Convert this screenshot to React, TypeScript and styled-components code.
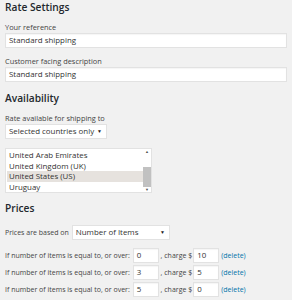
import React from "react";
import styled, { createGlobalStyle } from "styled-components";

const Global = createGlobalStyle`
  html, body { margin: 0; padding: 0; background: #f1f1f1; }
  body { font-family: "Open Sans", "Liberation Sans", sans-serif; color: #444; }
`;

const Page = styled.div`
  padding: 0 5px;
  width: 282px;
  display: flex;
  flex-direction: column;
`;

const Heading = styled.h3<{ $top: number }>`
  margin: ${(p) => p.$top}px 0 0;
  font-size: 10.2px;
  line-height: 15px;
  font-weight: 600;
  color: #23282d;
`;

const Label = styled.label<{ $top?: number }>`
  display: block;
  margin-top: ${(p) => p.$top ?? 7}px;
  font-size: 7.4px;
  line-height: 11px;
  color: #444;
`;

const TextInput = styled.div<{ $w?: number }>`
  box-sizing: border-box;
  height: 15px;
  flex-shrink: 0;
  width: ${(p) => (p.$w ? `${p.$w}px` : "100%")};
  background: #fff;
  border: 1px solid #e2e2e2;
  box-shadow: inset 0 1px 1px rgba(0, 0, 0, 0.04);
  font-size: 7.9px;
  line-height: 13px;
  padding: 0 3px;
  color: #333;
  white-space: nowrap;
  overflow: hidden;
`;

const Select = styled.div<{ $w: number }>`
  box-sizing: border-box;
  height: 15px;
  flex-shrink: 0;
  width: ${(p) => p.$w}px;
  background: #fff;
  border: 1px solid #e2e2e2;
  font-size: 7.9px;
  line-height: 13px;
  padding: 0 4px 0 3px;
  color: #333;
  display: flex;
  align-items: center;
  justify-content: space-between;
  white-space: nowrap;
`;

const Caret = styled.span`
  font-size: 5px;
  color: #222;
`;

const ListBox = styled.div`
  box-sizing: border-box;
  margin-top: 9px;
  width: 147px;
  height: 45px;
  background: #fff;
  border: 1px solid #e2e2e2;
  display: flex;
  padding: 1px 0 0 1px;
`;

const Options = styled.div`
  flex: 1;
  display: flex;
  flex-direction: column;
`;

const Option = styled.div<{ $selected?: boolean }>`
  height: 10.7px;
  font-size: 7.9px;
  line-height: 10.7px;
  padding-left: 2px;
  color: #333;
  background: ${(p) => (p.$selected ? "#e6e2de" : "transparent")};
  white-space: nowrap;
`;

const Scrollbar = styled.div`
  width: 8px;
  margin-top: -1px;
  display: flex;
  flex-direction: column;
  align-items: center;
  font-size: 4px;
  color: #555;
  line-height: 5px;
`;

const Track = styled.div`
  flex: 1;
  width: 100%;
  display: flex;
  flex-direction: column;
  justify-content: flex-end;
`;

const Thumb = styled.div`
  width: 100%;
  height: 20px;
  background: #c1c1c1;
`;

const Row = styled.div<{ $top: number }>`
  display: flex;
  align-items: center;
  margin-top: ${(p) => p.$top}px;
  height: 15px;
  font-size: 7px;
  white-space: nowrap;
`;

const RowText = styled.span<{ $gap: number }>`
  margin-right: ${(p) => p.$gap}px;
  flex-shrink: 0;
`;

const DeleteLink = styled.a`
  color: #0073aa;
  margin-left: 2px;
  font-size: 7px;
  text-decoration: none;
`;

const rules = [
  { over: "0", charge: "10" },
  { over: "3", charge: "5" },
  { over: "5", charge: "0" },
];

export default function App() {
  return (
    <>
      <Global />
      <Page>
        <Heading $top={0}>Rate Settings</Heading>
        <Label $top={7}>Your reference</Label>
        <TextInput>Standard shipping</TextInput>
        <Label $top={8}>Customer facing description</Label>
        <TextInput>Standard shipping</TextInput>
        <Heading $top={9}>Availability</Heading>
        <Label $top={7}>Rate available for shipping to</Label>
        <Select $w={102}>
          Selected countries only <Caret>▼</Caret>
        </Select>
        <ListBox>
          <Options>
            <Option>United Arab Emirates</Option>
            <Option>United Kingdom (UK)</Option>
            <Option $selected>United States (US)</Option>
            <Option>Uruguay</Option>
          </Options>
          <Scrollbar>
            <span>▲</span>
            <Track>
              <Thumb />
            </Track>
            <span>▼</span>
          </Scrollbar>
        </ListBox>
        <Heading $top={8}>Prices</Heading>
        <Row $top={9}>
          <RowText $gap={3}>Prices are based on</RowText>
          <Select $w={98}>
            Number of Items <Caret>▼</Caret>
          </Select>
        </Row>
        {rules.map((r, i) => (
          <Row key={i} $top={i === 0 ? 8 : 2}>
            <RowText $gap={3}>If number of items is equal to, or over:</RowText>
            <TextInput $w={26}>{r.over}</TextInput>
            <RowText $gap={1}>&nbsp;, charge $</RowText>
            <TextInput $w={26}>{r.charge}</TextInput>
            <DeleteLink href="#">(delete)</DeleteLink>
          </Row>
        ))}
      </Page>
    </>
  );
}
